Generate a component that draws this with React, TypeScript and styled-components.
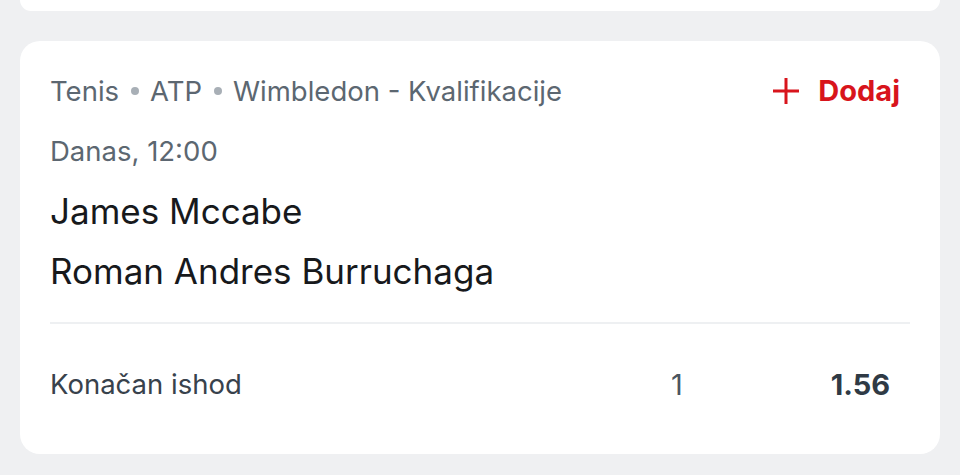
import React from "react";
import styled, { createGlobalStyle } from "styled-components";

const Global = createGlobalStyle`
  html, body { margin: 0; padding: 0; background: #eff0f2; }
  body { font-family: Inter, "Noto Sans", sans-serif; -webkit-font-smoothing: antialiased; }
`;

const Page = styled.div`
  display: flex;
  flex-direction: column;
  gap: 30px;
  padding: 0 20px 20px;
  background: #eff0f2;
  min-height: 475px;
  box-sizing: border-box;
`;

const PrevCard = styled.div`
  height: 11px;
  background: #ffffff;
  border-radius: 0 0 20px 20px;
`;

const Card = styled.div`
  background: #ffffff;
  border-radius: 20px;
  padding: 32px 30px 10px;
  display: flex;
  flex-direction: column;
`;

const Info = styled.div`
  display: flex;
  flex-direction: column;
  gap: 24px;
`;

const HeaderRow = styled.div`
  display: flex;
  justify-content: space-between;
  align-items: center;
  height: 36px;
`;

const Meta = styled.div`
  font-size: 27.5px;
  line-height: 36px;
  color: #5c6771;
  display: flex;
  align-items: center;
`;

const Dot = styled.span`
  display: inline-block;
  width: 8px;
  height: 8px;
  border-radius: 50%;
  background: #a8afb6;
  margin: 0 11px 0 12px;
`;

const AddButton = styled.button`
  border: none;
  background: none;
  padding: 0;
  margin-right: 10px;
  display: flex;
  align-items: center;
  gap: 18px;
  font-family: inherit;
  font-size: 29px;
  font-weight: 700;
  line-height: 36px;
  color: #d8141c;
  cursor: pointer;
`;

const Team = styled.div`
  font-size: 35px;
  line-height: 36px;
  color: #17191c;
`;

const Divider = styled.div`
  height: 2px;
  background: #eef0f2;
  margin-top: 33px;
`;

const OddsRow = styled.div`
  display: grid;
  grid-template-columns: 1fr 60px 183px;
  align-items: center;
  height: 120px;
  padding-right: 20px;
`;

const OddsLabel = styled.div`
  font-size: 27.5px;
  color: #38424c;
`;

const Outcome = styled.div`
  font-size: 29px;
  color: #4a5560;
  text-align: center;
`;

const OddValue = styled.div`
  font-size: 29px;
  font-weight: 700;
  color: #2f3a45;
  text-align: right;
`;

const PlusIcon = () => (
  <svg width="28" height="28" viewBox="0 0 28 28" fill="none">
    <path d="M14 1v26M1 14h26" stroke="#d8141c" strokeWidth="3" />
  </svg>
);

export default function App() {
  return (
    <>
      <Global />
      <Page>
        <PrevCard />
        <Card>
          <Info>
            <HeaderRow>
              <Meta>
                Tenis<Dot />ATP<Dot />Wimbledon - Kvalifikacije
              </Meta>
              <AddButton>
                <PlusIcon />
                Dodaj
              </AddButton>
            </HeaderRow>
            <Meta>Danas, 12:00</Meta>
            <Team>James Mccabe</Team>
            <Team>Roman Andres Burruchaga</Team>
          </Info>
          <Divider />
          <OddsRow>
            <OddsLabel>Konačan ishod</OddsLabel>
            <Outcome>1</Outcome>
            <OddValue>1.56</OddValue>
          </OddsRow>
        </Card>
      </Page>
    </>
  );
}
